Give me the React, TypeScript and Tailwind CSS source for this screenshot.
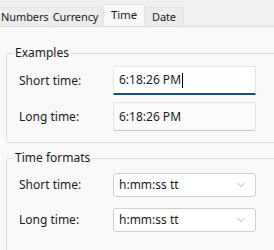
import { ChevronDown } from "lucide-react";

const font = { fontFamily: '"Noto Sans", "Open Sans", sans-serif' };

function Tab(props: { label: string; active?: boolean; className?: string }) {
	if (props.active) {
		return (
			<div className={`flex h-[22px] justify-center border-x border-t border-[#e3e3e3] bg-[#f9f9f9] pt-[1px] ${props.className ?? ""}`}>
				{props.label}
			</div>
		);
	}
	return (
		<div className={`flex h-[19px] items-center border-t border-r border-[#e3e3e3] bg-[#ececec] ${props.className ?? ""}`}>
			{props.label}
		</div>
	);
}

function Row(props: { label: string; children: React.ReactNode }) {
	return (
		<div className="flex items-center">
			<span className="w-[106px] pl-[12px]">{props.label}</span>
			{props.children}
		</div>
	);
}

function Dropdown(props: { value: string }) {
	return (
		<div className="flex h-[24px] w-[143px] items-center justify-between rounded-[3px] border border-[#cfcfcf] bg-white pl-[5px] pr-[8px]">
			<span>{props.value}</span>
			<ChevronDown className="h-[12px] w-[12px] text-[#777]" strokeWidth={1.2} />
		</div>
	);
}

export default function App() {
	return (
		<div className="h-[250px] w-[274px] overflow-hidden bg-[#f9f9f9] text-[12px] text-[#1b1b1b]" style={font}>
			<div className="flex h-[27px] items-end border-b border-[#dcdcdc] bg-[#f0f0f0] text-[11px] tracking-[-0.1px]">
				<Tab label="Numbers" className="w-[49px] pl-[1px]" />
				<Tab label="Currency" className="ml-[1px] w-[52px] justify-center" />
				<Tab label="Time" active className="ml-[1px] w-[42px] text-[11.5px]" />
				<Tab label="Date" className="w-[39px] justify-center" />
			</div>

			<div className="pl-[6px]">
				<fieldset className="mt-[18px] h-[98px] w-[300px] rounded-[3px] border border-[#dcdcdc]">
					<legend className="ml-[6px] px-[2px] leading-[16px]">Examples</legend>
					<div className="mt-[5px] flex flex-col gap-[7px]">
						<Row label="Short time:">
							<div className="flex h-[29px] w-[143px] items-center rounded-t-[3px] border-x border-t border-[#e6e6e6] border-b-2 border-b-[#1e4f72] bg-white pl-[5px]">
								<span>6:18:26 PM</span>
								<span className="ml-[1px] h-[15px] w-[1px] bg-black" />
							</div>
						</Row>
						<Row label="Long time:">
							<div className="flex h-[29px] w-[143px] items-center rounded-[3px] border border-[#e3e3e3] border-b-[#c8c8c8] bg-[#fbfbfb] pl-[5px]">
								6:18:26 PM
							</div>
						</Row>
					</div>
				</fieldset>

				<fieldset className="mt-[7px] h-[110px] w-[300px] rounded-[3px] border border-[#dcdcdc]">
					<legend className="ml-[6px] px-[2px] leading-[16px]">Time formats</legend>
					<div className="mt-[7px] flex flex-col gap-[11px]">
						<Row label="Short time:">
							<Dropdown value="h:mm:ss tt" />
						</Row>
						<Row label="Long time:">
							<Dropdown value="h:mm:ss tt" />
						</Row>
					</div>
				</fieldset>
			</div>
		</div>
	);
}
